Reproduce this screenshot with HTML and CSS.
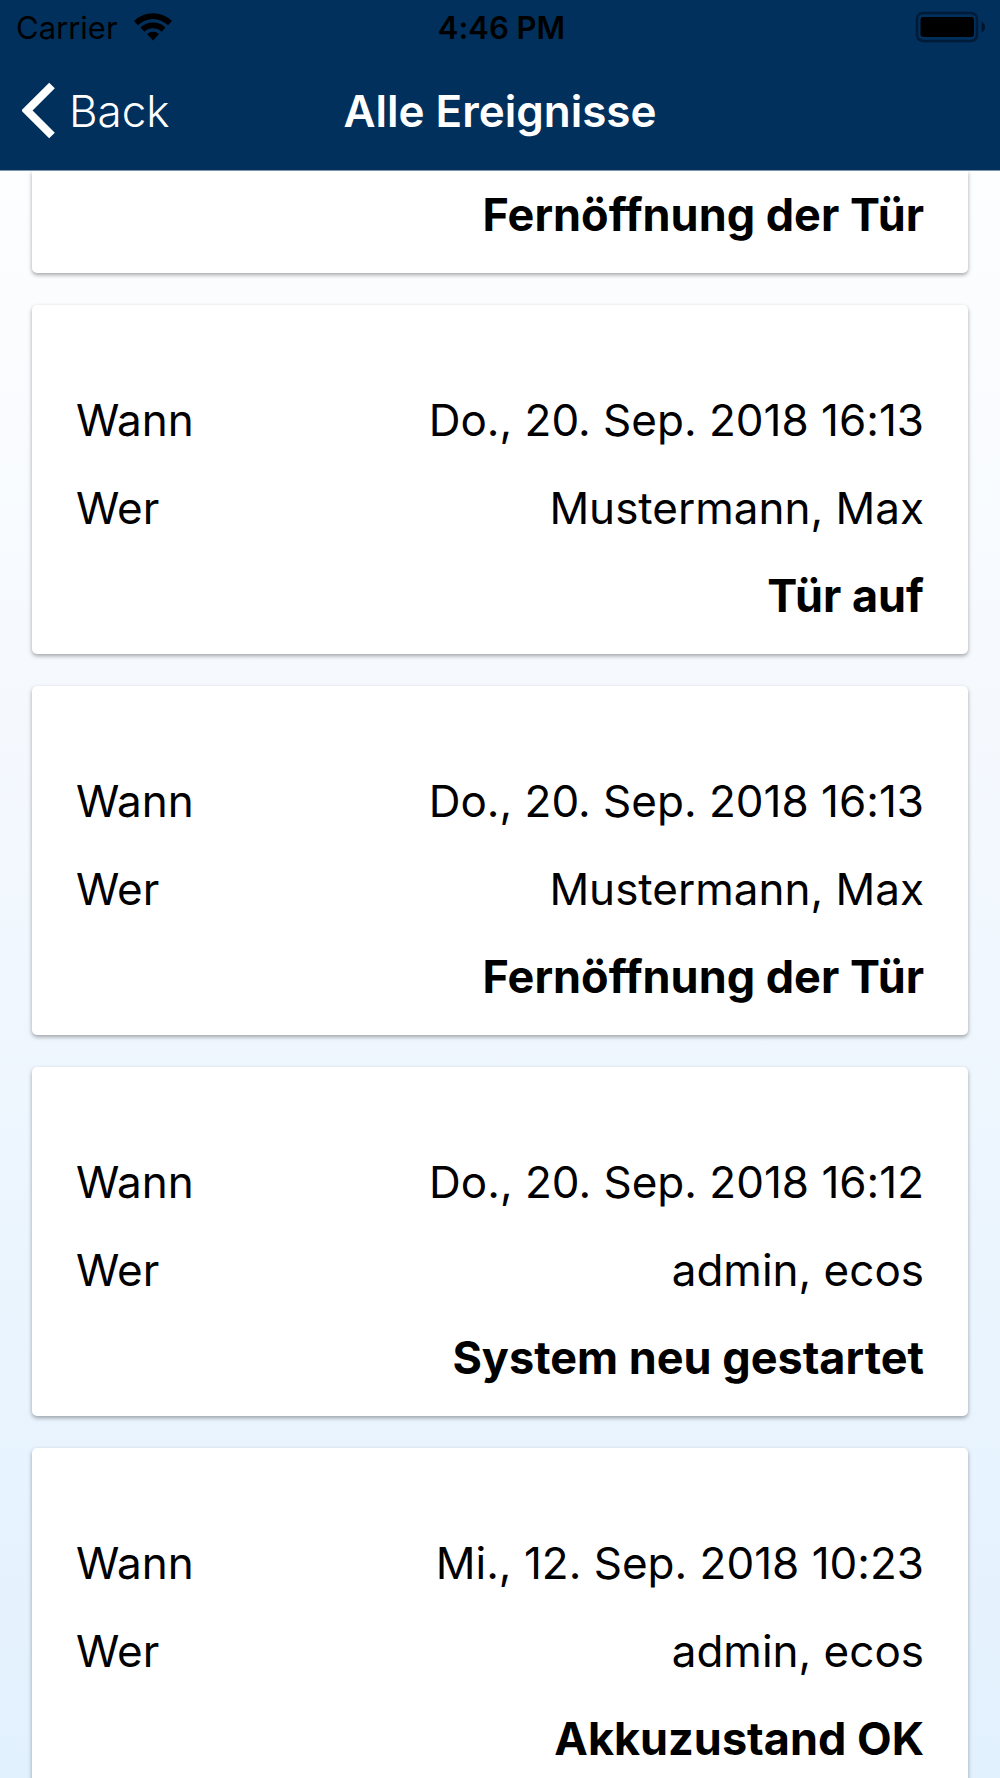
FILE: index.html
```html
<!DOCTYPE html>
<html lang="de">
<head>
    <meta charset="UTF-8">
    <meta name="viewport" content="width=device-width, initial-scale=1.0">
    <title>Alle Ereignisse</title>
    <link rel="stylesheet" href="styles.css">
</head>
<body>

<header>
    <div class="status-bar">
        <div class="carrier">
            <span>Carrier</span>
            <svg class="wifi" viewBox="0 0 38 28" aria-hidden="true">
                <path d="M0 8 A27 27 0 0 1 38 8 L34 12.2 A21.500 21.500 0 0 0 4 12.2 Z"/>
                <path d="M6.500 14.600 A18 18 0 0 1 31.500 14.600 L27.600 18.700 A12.500 12.500 0 0 0 10.400 18.700 Z"/>
                <path d="M13 21 A9 9 0 0 1 25 21 L19 27.500 Z"/>
            </svg>
        </div>
        <div class="time">4:46 PM</div>
        <svg class="battery" viewBox="0 0 72 32" aria-hidden="true">
            <rect x="2" y="2" width="60" height="28" rx="6" fill="none" stroke="#001b38" stroke-width="2.500"/>
            <rect x="5.500" y="6" width="53.500" height="20" rx="3"/>
            <path d="M66.500 10.500 Q70 12.500 70 16 Q70 19.500 66.500 21.500 Z" fill="#00152c"/>
        </svg>
    </div>
    <div class="nav-bar">
        <button type="button" class="back">
            <svg viewBox="0 0 34 58" aria-hidden="true">
                <path d="M30 3.500 L5 28.500 L30 53.500" fill="none" stroke="#fff" stroke-width="8"/>
            </svg>
            Back
        </button>
        <h1>Alle Ereignisse</h1>
    </div>
</header>

<main>
    <section class="card card-scrolled">
        <p class="event">Fernöffnung der Tür</p>
    </section>

    <section class="card">
        <dl>
            <div class="row"><dt>Wann</dt><dd>Do., 20. Sep. 2018 16:13</dd></div>
            <div class="row"><dt>Wer</dt><dd>Mustermann, Max</dd></div>
        </dl>
        <p class="event">Tür auf</p>
    </section>

    <section class="card">
        <dl>
            <div class="row"><dt>Wann</dt><dd>Do., 20. Sep. 2018 16:13</dd></div>
            <div class="row"><dt>Wer</dt><dd>Mustermann, Max</dd></div>
        </dl>
        <p class="event">Fernöffnung der Tür</p>
    </section>

    <section class="card">
        <dl>
            <div class="row"><dt>Wann</dt><dd>Do., 20. Sep. 2018 16:12</dd></div>
            <div class="row"><dt>Wer</dt><dd>admin, ecos</dd></div>
        </dl>
        <p class="event">System neu gestartet</p>
    </section>

    <section class="card">
        <dl>
            <div class="row"><dt>Wann</dt><dd>Mi., 12. Sep. 2018 10:23</dd></div>
            <div class="row"><dt>Wer</dt><dd>admin, ecos</dd></div>
        </dl>
        <p class="event">Akkuzustand OK</p>
    </section>
</main>

</body>
</html>
```
FILE: styles.css
```css
* {
    box-sizing: border-box;
}

body {
    font-family: Inter, Roboto, sans-serif;
    font-feature-settings: "calt" 0, "liga" 0;
    margin: 0;
    height: 100vh;
    display: flex;
    flex-direction: column;
    overflow: hidden;
    color: #000;
    background: linear-gradient(#ffffff, #f5f9fe 40%, #e2f1fe);
}

header {
    flex: none;
    background-color: #01305c;
    border-bottom: 1px solid #8096ac;
}

.status-bar {
    display: grid;
    grid-template-columns: 1fr auto 1fr;
    align-items: center;
    height: 54px;
    padding: 0 13px 0 16px;
    color: #000;
    font-size: 31px;
}

.carrier {
    display: flex;
    align-items: center;
    gap: 16px;
}

.wifi {
    width: 38px;
    height: 28px;
}

.time {
    font-weight: 600;
}

.battery {
    width: 72px;
    height: 32px;
    justify-self: end;
}

.nav-bar {
    display: grid;
    grid-template-columns: 1fr auto 1fr;
    align-items: center;
    height: 116px;
    padding: 0 22px 2px;
}

.back {
    display: flex;
    align-items: center;
    justify-self: start;
    gap: 13px;
    padding: 0;
    border: none;
    background: none;
    color: white;
    font-family: inherit;
    font-size: 44px;
    font-weight: 300;
    cursor: pointer;
}

.back svg {
    width: 34px;
    height: 58px;
}

h1 {
    margin: 0;
    color: white;
    font-size: 44px;
    font-weight: 600;
}

main {
    flex: 1;
    min-height: 0;
    overflow: hidden;
    display: flex;
    flex-direction: column;
    gap: 32px;
    padding: 0 32px;
}

.card {
    flex: none;
    padding: 71px 44px 14px;
    background-color: white;
    border-radius: 5px;
    box-shadow: 0 2px 4px rgba(0, 0, 0, 0.35);
    font-size: 44px;
    line-height: 88px;
}

/* top of this one is scrolled under the header */
.card-scrolled {
    padding-top: 0;
    border-radius: 0 0 5px 5px;
}

dl, dd, .event {
    margin: 0;
}

.row {
    display: flex;
    justify-content: space-between;
}

.event {
    text-align: right;
    font-size: 45px;
    font-weight: 700;
}
```
